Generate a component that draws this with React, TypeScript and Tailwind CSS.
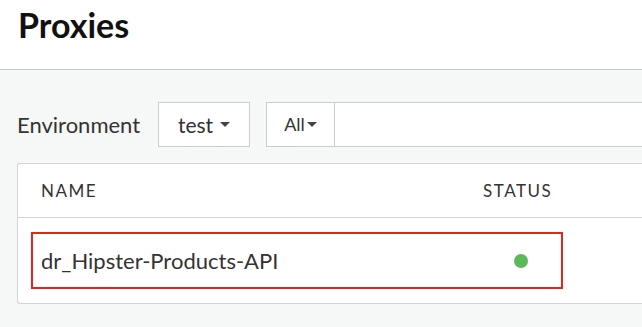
export default function App() {
  return (
    <div className="w-[642px] h-[327px] overflow-hidden bg-[#f6f7f7] font-['Lato',sans-serif] text-[#333]">
      <div className="h-[70px] bg-white border-b border-[#c9c9c9] pl-[18px] pt-[6px]">
        <h1 className="text-[34px] font-bold text-[#111] leading-[38px]">Proxies</h1>
      </div>
      <div className="pl-[17px] pt-[32px]">
        <div className="flex items-center h-[45px]">
          <span className="text-[22px] text-[#333] w-[141px]">Environment</span>
          <div className="w-[92px] h-[45px] bg-white border border-[#ccc] flex items-center justify-center gap-[7px] text-[21px]">
            test
            <span className="w-0 h-0 border-l-[5px] border-r-[5px] border-t-[5px] border-l-transparent border-r-transparent border-t-[#444]" />
          </div>
          <div className="ml-[16px] flex flex-1 h-[45px]">
            <div className="w-[69px] bg-white border border-[#ccc] flex items-center justify-center gap-[2px] text-[18px]">
              All
              <span className="w-0 h-0 border-l-[5px] border-r-[5px] border-t-[5px] border-l-transparent border-r-transparent border-t-[#444]" />
            </div>
            <div className="flex-1 bg-white border border-l-0 border-[#ccc] border-r-0" />
          </div>
        </div>
        <div className="mt-[16px] bg-white border border-[#d4d4d4] border-r-0 rounded-l-[3px] h-[141px]">
          <div className="h-[54px] border-b border-[#d4d4d4] flex items-center text-[17px] tracking-[0.09em] text-[#333]">
            <span className="ml-[23px] w-[442px]">NAME</span>
            <span>STATUS</span>
          </div>
          <div className="pl-[13px] pt-[14px]">
            <div className="w-[532px] h-[57px] border-2 border-[#e8231b] flex items-center">
              <span className="ml-[8px] text-[22px] w-[473px]">dr_Hipster-Products-API</span>
              <span className="w-[14px] h-[14px] rounded-full bg-[#5cb85c]" />
            </div>
          </div>
        </div>
      </div>
    </div>
  )
}
